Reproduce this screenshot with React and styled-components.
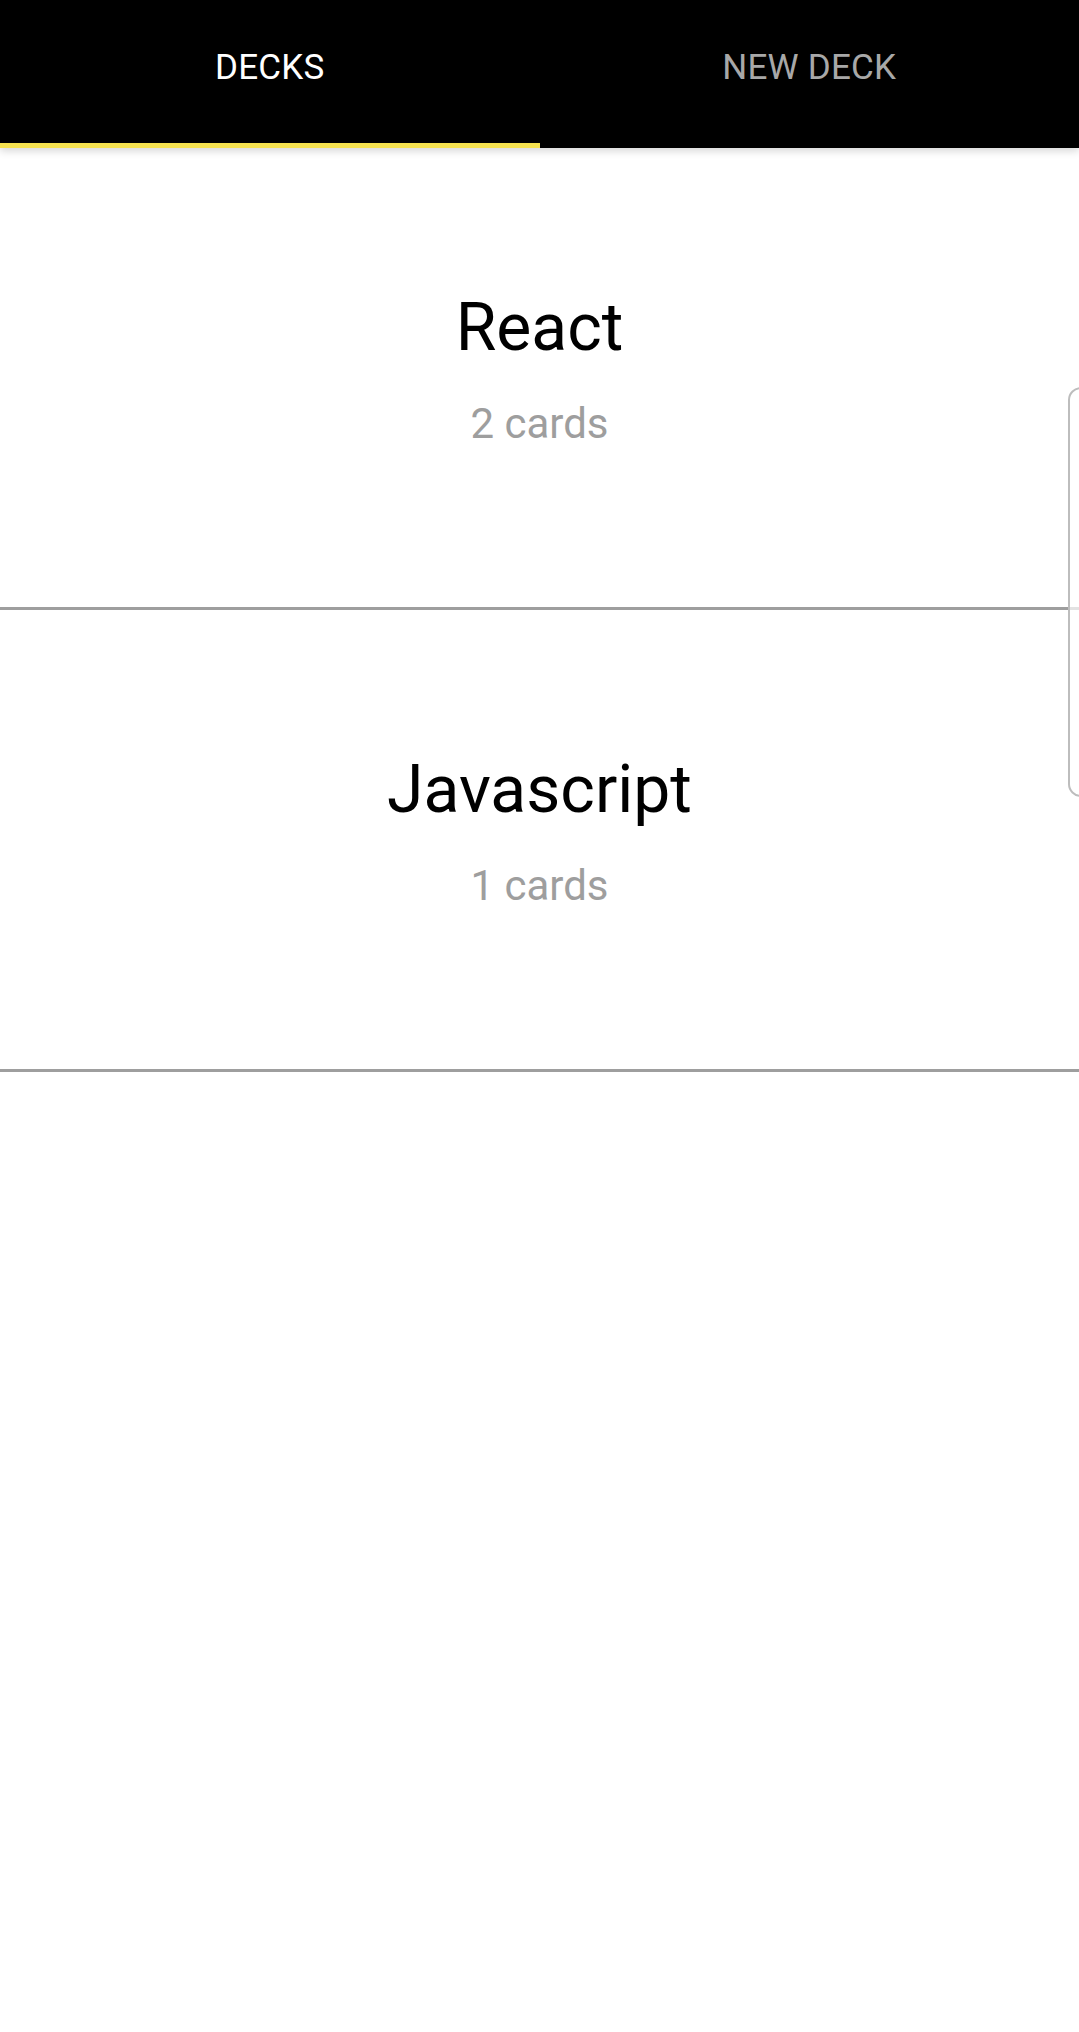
import React from "react";
import styled, { createGlobalStyle } from "styled-components";

const GlobalStyle = createGlobalStyle`
  html, body {
    margin: 0;
    padding: 0;
    background: #ffffff;
  }
  body {
    font-family: Roboto, "Noto Sans", "Liberation Sans", sans-serif;
    overflow: hidden;
  }
`;

const Screen = styled.div`
  position: relative;
  width: 1079px;
  height: 2032px;
  background: #ffffff;
  overflow: hidden;
`;

const TabBar = styled.nav`
  position: relative;
  z-index: 2;
  display: flex;
  height: 148px;
  background: #000000;
  box-shadow: 0 3px 8px rgba(0, 0, 0, 0.16);
`;

const Tab = styled.div`
  flex: 1;
  position: relative;
  display: flex;
  justify-content: center;
  padding-top: 47px;
  box-sizing: border-box;
  font-size: 35px;
  line-height: 41px;
  letter-spacing: 0.2px;
  color: ${(p) => (p.$active ? "#ffffff" : "#a8a8a8")};
  text-transform: uppercase;
`;

const Indicator = styled.span`
  position: absolute;
  left: 0;
  right: 0;
  bottom: 0;
  height: 5px;
  background: #f6e24f;
`;

const DeckList = styled.main`
  display: flex;
  flex-direction: column;
`;

const DeckItem = styled.div`
  display: flex;
  flex-direction: column;
  align-items: center;
  box-sizing: border-box;
  height: 462px;
  padding-top: 141px;
  border-bottom: 3px solid #9e9e9e;
`;

const DeckTitle = styled.div`
  font-size: 66px;
  line-height: 77px;
  color: #000000;
`;

const DeckCount = styled.div`
  margin-top: 33px;
  font-size: 42px;
  line-height: 49px;
  color: #9e9e9e;
`;

const EdgeHandle = styled.div`
  position: absolute;
  top: 387px;
  left: 1068px;
  width: 30px;
  height: 410px;
  box-sizing: border-box;
  border: 2px solid #bdbdbd;
  border-radius: 13px;
  background: rgba(255, 255, 255, 0.7);
`;

const decks = [
  { title: "React", count: 2 },
  { title: "Javascript", count: 1 },
];

export default function App() {
  return (
    <Screen>
      <GlobalStyle />
      <TabBar>
        <Tab $active>
          Decks
          <Indicator />
        </Tab>
        <Tab>New Deck</Tab>
      </TabBar>
      <DeckList>
        {decks.map((d) => (
          <DeckItem key={d.title}>
            <DeckTitle>{d.title}</DeckTitle>
            <DeckCount>{d.count} cards</DeckCount>
          </DeckItem>
        ))}
      </DeckList>
      <EdgeHandle />
    </Screen>
  );
}
